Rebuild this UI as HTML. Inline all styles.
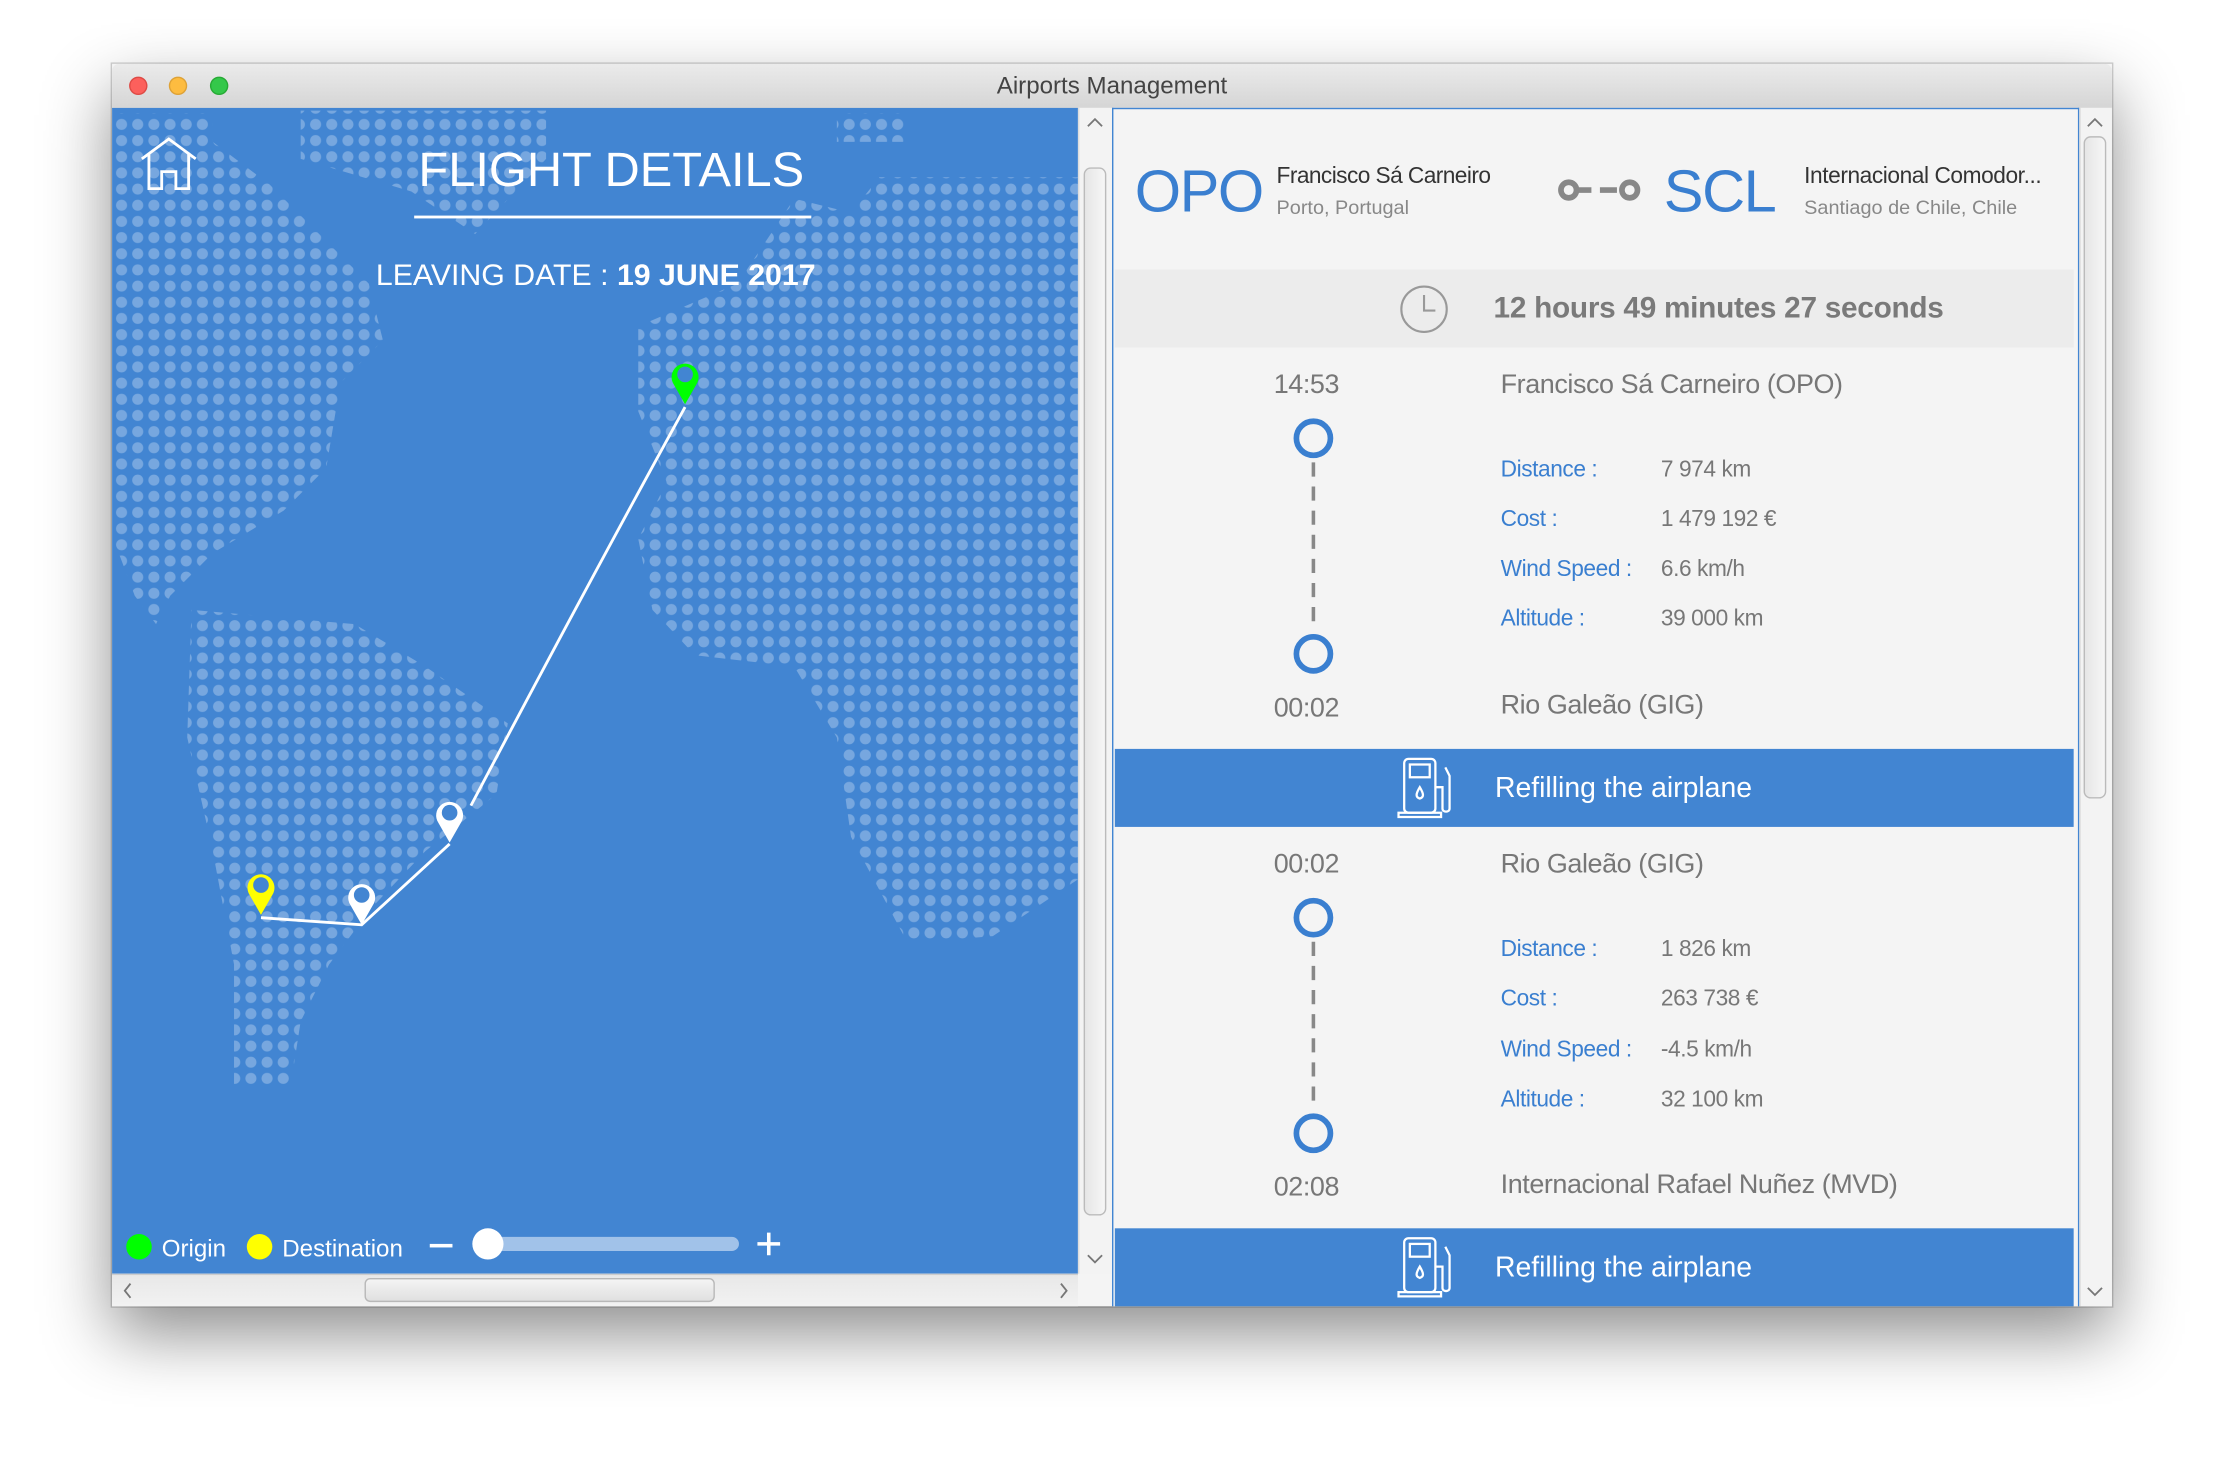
<!DOCTYPE html>
<html><head><meta charset="utf-8"><style>
html,body{margin:0;padding:0;width:2224px;height:1468px;overflow:hidden;background:#fff;font-family:"Liberation Sans",Arial,sans-serif}
#w{position:absolute;left:0;top:0;width:1568px;height:1035px;transform:scale(1.41837);transform-origin:0 0}
.a{position:absolute}
#win{left:79px;top:45px;width:1410px;height:876px;box-shadow:0 20px 45px rgba(0,0,0,.45),0 0 0 1px rgba(0,0,0,.18);background:#f4f4f4}
#tb{left:0;top:0;width:1410px;height:31px;background:linear-gradient(#ebebeb,#d5d5d5);border-bottom:1px solid #b5b5b5;border-radius:5px 5px 0 0}
.tl{width:13px;height:13px;border-radius:50%;top:9px}
.lbl{color:#3a7fd0;font-size:16px;letter-spacing:-0.3px}
.val{color:#777;font-size:16px;letter-spacing:-0.3px}
.t{color:#777;font-size:19px;letter-spacing:-0.3px}
.ar{font-size:13px;color:#777}
</style></head><body><div id="w">
<div id="win" class="a">
 <div id="tb" class="a">
  <div class="a tl" style="left:12px;background:#fc605c;border:1px solid #de4a45;box-sizing:border-box"></div>
  <div class="a tl" style="left:40px;background:#fdbc40;border:1px solid #dea236;box-sizing:border-box"></div>
  <div class="a tl" style="left:69px;background:#34c84a;border:1px solid #27aa35;box-sizing:border-box"></div>
  <div class="a" style="left:0;width:1410px;top:6px;text-align:center;font-size:17px;color:#444">Airports Management</div>
 </div>
</div>
<svg class="a" style="left:79px;top:76px" width="681" height="822" viewBox="79 76 681 822">
 <defs>
  <pattern id="p" x="80" y="82" width="11.4" height="11.4" patternUnits="userSpaceOnUse"><circle cx="5.7" cy="5.7" r="3.9" fill="rgba(255,255,255,0.28)"/></pattern>
 </defs>
 <rect x="79" y="76" width="681" height="822" fill="#4285d2"/>
 <g fill="url(#p)">
  <polygon points="80,80 150,80 150,100 190,130 260,200 270,240 240,270 230,330 200,360 150,390 120,420 110,440 95,420 80,380"/>
  <polygon points="212,78 385,78 385,112 335,165 290,135 212,112"/>
  <polygon points="135,430 250,440 300,470 358,510 350,560 300,600 262,640 232,680 212,720 205,765 165,765 165,680 150,600 132,520"/>
  <polygon points="450,230 520,200 560,140 600,150 620,125 760,125 760,620 700,660 640,665 600,590 590,520 560,470 490,462 460,430 450,380 470,340 450,290"/>
  <polygon points="590,80 640,80 640,100 590,100"/>
 </g>
 <path d="M100 112 L119 98 L138 112 M105 108 V133 H114 V121 H124 V133 H133 V108" fill="none" stroke="#fff" stroke-width="2"/>
 <text x="431" y="131" text-anchor="middle" fill="#fff" font-size="34" font-family="Liberation Sans" textLength="272" lengthAdjust="spacingAndGlyphs">FLIGHT DETAILS</text>
 <rect x="292" y="152" width="280" height="2" fill="#fff"/>
 <text x="420" y="201" text-anchor="middle" fill="#fff" font-size="21" font-family="Liberation Sans" textLength="310" lengthAdjust="spacingAndGlyphs">LEAVING DATE : <tspan font-weight="bold">19 JUNE 2017</tspan></text>
 <path d="M483 287 Q410 420 332 568 M317 595 L255 652 L184 647" fill="none" stroke="#fff" stroke-width="2"/>
 <g>
  <path d="M483 285 L475 271 A9.5 9.5 0 1 1 491 271 Z" fill="#0f0"/><circle cx="483" cy="264" r="5.5" fill="#4285d2"/>
  <path d="M184 645 L176 631 A9.5 9.5 0 1 1 192 631 Z" fill="#ff0"/><circle cx="184" cy="624" r="5.5" fill="#4285d2"/>
  <path d="M317 594 L309 580 A9.5 9.5 0 1 1 325 580 Z" fill="#fff"/><circle cx="317" cy="573" r="5.5" fill="#4285d2"/>
  <path d="M255 652 L247 638 A9.5 9.5 0 1 1 263 638 Z" fill="#fff"/><circle cx="255" cy="631" r="5.5" fill="#4285d2"/>
 </g>
 <circle cx="98" cy="879" r="9" fill="#0f0"/>
 <text x="114" y="886" fill="#fff" font-size="17" font-family="Liberation Sans">Origin</text>
 <circle cx="183" cy="879" r="9" fill="#ff0"/>
 <text x="199" y="886" fill="#fff" font-size="17" font-family="Liberation Sans">Destination</text>
 <rect x="303" y="877" width="16" height="2.5" fill="#fff"/>
 <rect x="345" y="872" width="176" height="10" rx="5" fill="rgba(255,255,255,.5)"/>
 <circle cx="344" cy="877" r="11" fill="#fff"/>
 <path d="M542 869 V885 M534 877 H550" stroke="#fff" stroke-width="2.5"/>
</svg>
<div class="a" style="left:760px;top:76px;width:24px;height:822px;background:#f3f3f3;border-left:1px solid #ddd;box-sizing:border-box"></div>
<div class="a" style="left:764px;top:118px;width:16px;height:739px;background:linear-gradient(90deg,#e6e6e6,#f6f6f6);border:1px solid #bbb;border-radius:5px;box-sizing:border-box"></div>
<svg class="a" style="left:764px;top:80px" width="16" height="12"><path d="M3 9L8 4L13 9" fill="none" stroke="#777" stroke-width="1.3"/></svg>
<svg class="a" style="left:764px;top:882px" width="16" height="12"><path d="M3 3L8 8L13 3" fill="none" stroke="#777" stroke-width="1.3"/></svg>
<div class="a" style="left:79px;top:898px;width:681px;height:23px;background:linear-gradient(#e8e8e8,#f2f2f2);border-top:1px solid #ccc;box-sizing:border-box"></div>
<div class="a" style="left:257px;top:901px;width:247px;height:17px;background:linear-gradient(#f4f4f4,#e0e0e0);border:1px solid #b8b8b8;border-radius:4px;box-sizing:border-box"></div>
<svg class="a" style="left:84px;top:902px" width="12" height="16"><path d="M8 3L4 8L8 13" fill="none" stroke="#777" stroke-width="1.3"/></svg>
<svg class="a" style="left:744px;top:902px" width="12" height="16"><path d="M4 3L8 8L4 13" fill="none" stroke="#777" stroke-width="1.3"/></svg>
<div class="a" style="left:784px;top:76px;width:682px;height:845px;background:#f4f4f4;border:1px solid #4285d2;border-bottom:none;box-sizing:border-box"></div>
<div class="a" style="left:1466px;top:76px;width:23px;height:845px;background:#f3f3f3;border-left:1px solid #ddd;box-sizing:border-box"></div>
<div class="a" style="left:1469px;top:96px;width:16px;height:467px;background:linear-gradient(90deg,#e6e6e6,#f6f6f6);border:1px solid #bbb;border-radius:5px;box-sizing:border-box"></div>
<svg class="a" style="left:1469px;top:80px" width="16" height="12"><path d="M3 9L8 4L13 9" fill="none" stroke="#777" stroke-width="1.3"/></svg>
<svg class="a" style="left:1469px;top:905px" width="16" height="12"><path d="M3 3L8 8L13 3" fill="none" stroke="#777" stroke-width="1.3"/></svg>

<div class="a" style="left:800px;top:111px;font-size:42px;color:#3a7fd0;letter-spacing:-1px">OPO</div>
<div class="a" style="left:900px;top:116px;font-size:16px;color:#333;letter-spacing:-0.4px">Francisco Sá Carneiro</div>
<div class="a" style="left:900px;top:138px;font-size:14px;color:#888">Porto, Portugal</div>
<svg class="a" style="left:1097px;top:124px" width="64" height="20"><circle cx="9" cy="10" r="5.5" fill="none" stroke="#888" stroke-width="4"/><path d="M14 10H25M31 10H43" stroke="#888" stroke-width="4"/><circle cx="52" cy="10" r="5.5" fill="none" stroke="#888" stroke-width="4"/></svg>
<div class="a" style="left:1173px;top:111px;font-size:42px;color:#3a7fd0;letter-spacing:-1px">SCL</div>
<div class="a" style="left:1272px;top:116px;font-size:16px;color:#333;letter-spacing:-0.3px">Internacional Comodor...</div>
<div class="a" style="left:1272px;top:138px;font-size:14px;color:#888">Santiago de Chile, Chile</div>

<div class="a" style="left:786px;top:190px;width:676px;height:55px;background:#ececec"></div>
<svg class="a" style="left:986px;top:200px" width="36" height="36"><circle cx="18" cy="18" r="16" fill="none" stroke="#999" stroke-width="1.5"/><path d="M18 8V19H26" fill="none" stroke="#999" stroke-width="1.5"/></svg>
<div class="a" style="left:1053px;top:206px;font-size:21px;font-weight:bold;color:#7a7a7a;letter-spacing:-0.2px">12 hours 49 minutes 27 seconds</div>

<div class="a t" style="left:898px;top:261px">14:53</div>
<div class="a t" style="left:1058px;top:261px">Francisco Sá Carneiro (OPO)</div>
<svg class="a" style="left:906px;top:290px" width="40" height="190"><circle cx="20" cy="19" r="12" fill="none" stroke="#3a7fd0" stroke-width="4"/><path d="M20 36V155" stroke="#888" stroke-width="2.5" stroke-dasharray="10 7"/><circle cx="20" cy="171" r="12" fill="none" stroke="#3a7fd0" stroke-width="4"/></svg>
<div class="a t" style="left:898px;top:489px">00:02</div>
<div class="a t" style="left:1058px;top:487px">Rio Galeão (GIG)</div>
<div class="a lbl" style="left:1058px;top:323px">Distance :</div><div class="a val" style="left:1171px;top:323px">7 974 km</div>
<div class="a lbl" style="left:1058px;top:358px">Cost :</div><div class="a val" style="left:1171px;top:358px">1 479 192 €</div>
<div class="a lbl" style="left:1058px;top:393px">Wind Speed :</div><div class="a val" style="left:1171px;top:393px">6.6 km/h</div>
<div class="a lbl" style="left:1058px;top:428px">Altitude :</div><div class="a val" style="left:1171px;top:428px">39 000 km</div>
<div class="a" style="left:786px;top:528px;width:676px;height:55px;background:#4285d2"></div>
<svg class="a" style="left:985px;top:533px" width="46" height="46"><g fill="none" stroke="#fff" stroke-width="1.6"><rect x="5" y="2" width="22" height="38" rx="3"/><rect x="9" y="6" width="14" height="9"/><path d="M1 43H31V40H1Z M16 22C13 27 13 29 16 30C19 29 19 27 16 22Z M27 22H32V37C32 40 37 40 37 37V14L34 8"/></g></svg>
<div class="a" style="left:1054px;top:545px;font-size:20px;color:#fff">Refilling the airplane</div>

<div class="a t" style="left:898px;top:599px">00:02</div>
<div class="a t" style="left:1058px;top:599px">Rio Galeão (GIG)</div>
<svg class="a" style="left:906px;top:628px" width="40" height="190"><circle cx="20" cy="19" r="12" fill="none" stroke="#3a7fd0" stroke-width="4"/><path d="M20 36V155" stroke="#888" stroke-width="2.5" stroke-dasharray="10 7"/><circle cx="20" cy="171" r="12" fill="none" stroke="#3a7fd0" stroke-width="4"/></svg>
<div class="a t" style="left:898px;top:827px">02:08</div>
<div class="a t" style="left:1058px;top:825px">Internacional Rafael Nuñez (MVD)</div>
<div class="a lbl" style="left:1058px;top:661px">Distance :</div><div class="a val" style="left:1171px;top:661px">1 826 km</div>
<div class="a lbl" style="left:1058px;top:696px">Cost :</div><div class="a val" style="left:1171px;top:696px">263 738 €</div>
<div class="a lbl" style="left:1058px;top:732px">Wind Speed :</div><div class="a val" style="left:1171px;top:732px">-4.5 km/h</div>
<div class="a lbl" style="left:1058px;top:767px">Altitude :</div><div class="a val" style="left:1171px;top:767px">32 100 km</div>
<div class="a" style="left:786px;top:866px;width:676px;height:55px;background:#4285d2"></div>
<svg class="a" style="left:985px;top:871px" width="46" height="46"><g fill="none" stroke="#fff" stroke-width="1.6"><rect x="5" y="2" width="22" height="38" rx="3"/><rect x="9" y="6" width="14" height="9"/><path d="M1 43H31V40H1Z M16 22C13 27 13 29 16 30C19 29 19 27 16 22Z M27 22H32V37C32 40 37 40 37 37V14L34 8"/></g></svg>
<div class="a" style="left:1054px;top:883px;font-size:20px;color:#fff">Refilling the airplane</div>
</div></body></html>
